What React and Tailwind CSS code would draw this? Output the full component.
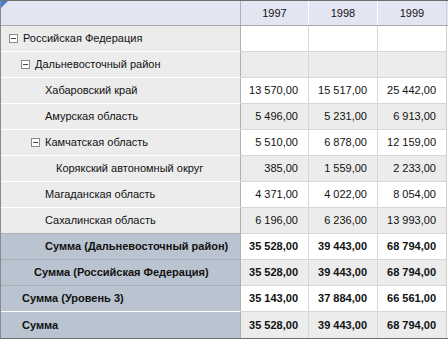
import React from "react";

const rows = [
  { label: "Российская Федерация", indent: 8, box: true, vals: ["", "", ""] },
  { label: "Дальневосточный район", indent: 20, box: true, vals: ["", "", ""] },
  { label: "Хабаровский край", indent: 44, vals: ["13 570,00", "15 517,00", "25 442,00"] },
  { label: "Амурская область", indent: 44, vals: ["5 496,00", "5 231,00", "6 913,00"] },
  { label: "Камчатская область", indent: 30, box: true, vals: ["5 510,00", "6 878,00", "12 159,00"] },
  { label: "Корякский автономный округ", indent: 55, vals: ["385,00", "1 559,00", "2 233,00"] },
  { label: "Магаданская область", indent: 44, vals: ["4 371,00", "4 022,00", "8 054,00"] },
  { label: "Сахалинская область", indent: 44, vals: ["6 196,00", "6 236,00", "13 993,00"] },
  { label: "Сумма (Дальневосточный район)", indent: 44, total: true, vals: ["35 528,00", "39 443,00", "68 794,00"] },
  { label: "Сумма (Российская Федерация)", indent: 33, total: true, vals: ["35 528,00", "39 443,00", "68 794,00"] },
  { label: "Сумма (Уровень 3)", indent: 21, total: true, vals: ["35 143,00", "37 884,00", "66 561,00"] },
  { label: "Сумма", indent: 21, total: true, last: true, vals: ["35 528,00", "39 443,00", "68 794,00"] },
];

function Box() {
  return (
    <span className="w-[9px] h-[9px] border border-[#8a8a8a] bg-white flex items-center justify-center mr-[5px] shrink-0">
      <span className="w-[5px] h-px bg-[#444]" />
    </span>
  );
}

export default function App() {
  return (
    <div
      className="w-[448px] h-[339px] bg-white text-[11px] text-[#111] overflow-hidden"
      style={{ fontFamily: "'Liberation Sans', Arial, sans-serif" }}
    >
      <div className="border-t border-t-[#6e6e6e] border-b border-b-[#6e6e6e] border-l border-l-[#8a8a8a]">
        {/* header */}
        <div className="flex h-[25px] bg-[#e3e5f3] border-b border-b-[#a8a8a8]">
          <div className="relative w-[240px] shrink-0 border-r border-r-[#b0b0b0]">
            <div
              className="absolute left-0 top-0 w-[7px] h-[7px] bg-[#3f7fd8]"
              style={{ clipPath: "polygon(0 0, 100% 0, 0 100%)" }}
            />
          </div>
          {["1997", "1998", "1999"].map((y, i) => (
            <div
              key={y}
              className={
                "flex shrink-0 items-center justify-center " +
                (i === 0 ? "w-[68px] border-r border-r-white" : i === 1 ? "w-[69px] border-r border-r-white" : "w-[69px] border-r border-r-[#d0d0d0]")
              }
            >
              {y}
            </div>
          ))}
        </div>
        {rows.map((r, idx) => {
          const gray = idx % 2 === 1;
          const dataBg = gray ? "bg-[#ececec]" : "bg-white";
          return (
            <div key={idx} className="flex h-[26px]">
              <div
                className={
                  "w-[240px] shrink-0 border-r border-r-[#b0b0b0] flex items-center " +
                  (r.total
                    ? "bg-[#bac4d0] font-bold " + (r.last ? "" : idx === 10 ? "border-b border-b-white" : "border-b border-b-[#a9b0b8]")
                    : "bg-[#ececec] border-b " + (idx === 7 ? "border-b-[#a9b0b8]" : "border-b-white"))
                }
                style={{ paddingLeft: r.indent }}
              >
                {r.box && <Box />}
                <span className="whitespace-nowrap">{r.label}</span>
              </div>
              {r.vals.map((v, i) => (
                <div
                  key={i}
                  className={
                    dataBg +
                    " flex shrink-0 items-center justify-end whitespace-nowrap " +
                    (r.last ? "" : "border-b border-b-[#d6d6d6] ") +
                    (r.total ? "font-bold " : "") +
                    (i === 0 ? "w-[68px] pr-[10px] border-r border-r-[#d6d6d6]" : i === 1 ? "w-[69px] pr-[10px] border-r border-r-[#d6d6d6]" : "w-[69px] pr-[10px] border-r border-r-[#d0d0d0]")
                  }
                >
                  {v}
                </div>
              ))}
            </div>
          );
        })}
      </div>
    </div>
  );
}
